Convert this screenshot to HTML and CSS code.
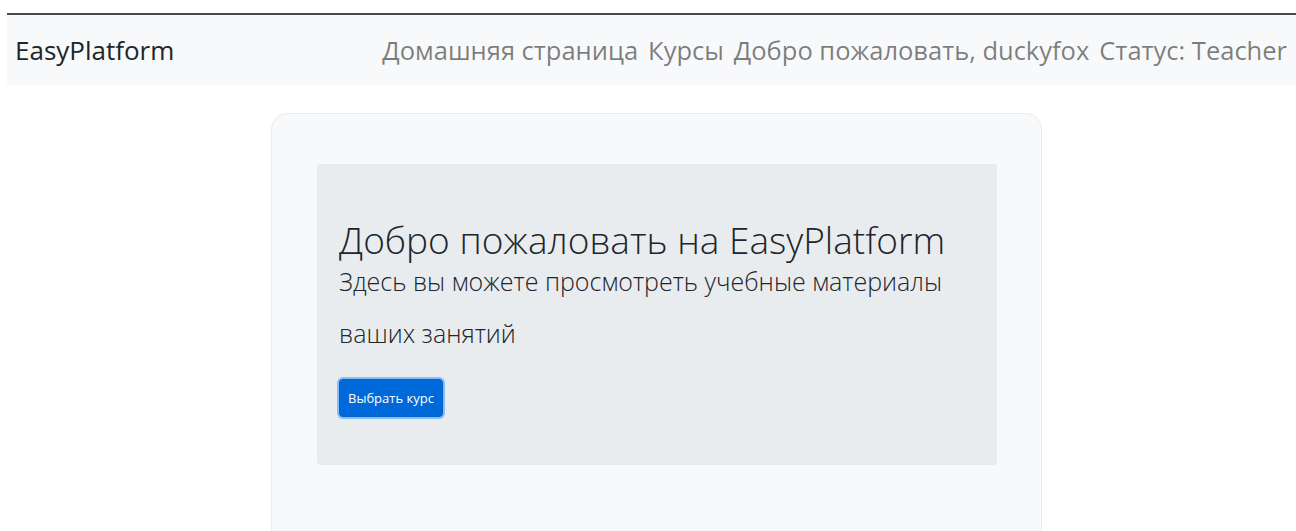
FILE: index.html
```html
<!DOCTYPE html>
<html lang="ru">
<head>
<meta charset="utf-8">
<title>EasyPlatform</title>
<link rel="stylesheet" href="styles.css">
</head>
<body>
<div class="page">
  <nav class="navbar">
    <a class="brand" href="#">EasyPlatform</a>
    <ul class="nav-links">
      <li><a href="#">Домашняя страница</a></li>
      <li><a href="#">Курсы</a></li>
      <li><span>Добро пожаловать, duckyfox</span></li>
      <li><span>Статус: Teacher</span></li>
    </ul>
  </nav>
  <main class="card">
    <section class="jumbotron">
      <h1 class="display">Добро пожаловать на EasyPlatform</h1>
      <p class="lead">Здесь вы можете просмотреть учебные материалы ваших занятий</p>
      <a class="btn-primary" href="#">Выбрать курс</a>
    </section>
  </main>
</div>
</body>
</html>
```
FILE: styles.css
```css
html, body {
  margin: 0;
  background: #fff;
}

body {
  font-family: "Open Sans", "Noto Sans", sans-serif;
  color: #212529;
  overflow: hidden;
}

.page {
  padding: 13px 0 0 7px;
}

/* top navigation bar */
.navbar {
  display: flex;
  align-items: center;
  justify-content: space-between;
  height: 70px;
  padding: 0 9px 0 8px;
  background: #f8f9fa;
  border-top: 2px solid #4a4a4a;
}

.brand {
  font-size: 26px;
  color: #212529;
  text-decoration: none;
}

.nav-links {
  display: flex;
  gap: 10px;
  margin: 0;
  padding: 0;
  list-style: none;
  font-size: 25.5px;
  color: rgba(0, 0, 0, 0.5);
}

.nav-links a {
  color: inherit;
  text-decoration: none;
}

/* main card */
.card {
  width: 771px;
  height: 460px;
  box-sizing: border-box;
  margin: 28px 0 0 264px;
  padding: 50px 44px 0 45px;
  background: #f8f9fa;
  border: 1px solid #ececec;
  border-radius: 16px;
}

.jumbotron {
  height: 301px;
  box-sizing: border-box;
  padding: 54px 22px 0;
  background: #e9ecef;
  border-radius: 3px;
}

.display {
  margin: 0;
  font-size: 37px;
  font-weight: 300;
  line-height: 1.2;
}

.lead {
  margin: -7px 0 0;
  width: 620px;
  font-size: 25px;
  font-weight: 300;
  line-height: 52px;
}

.btn-primary {
  display: inline-block;
  margin-top: 20px;
  padding: 0 8px;
  height: 36px;
  line-height: 36px;
  font-size: 13px;
  color: #fff;
  text-decoration: none;
  background: #0069d9;
  border: 1px solid #0062cc;
  border-radius: 4px;
  box-shadow: 0 0 0 2px rgba(38, 143, 255, 0.5);
}
```
